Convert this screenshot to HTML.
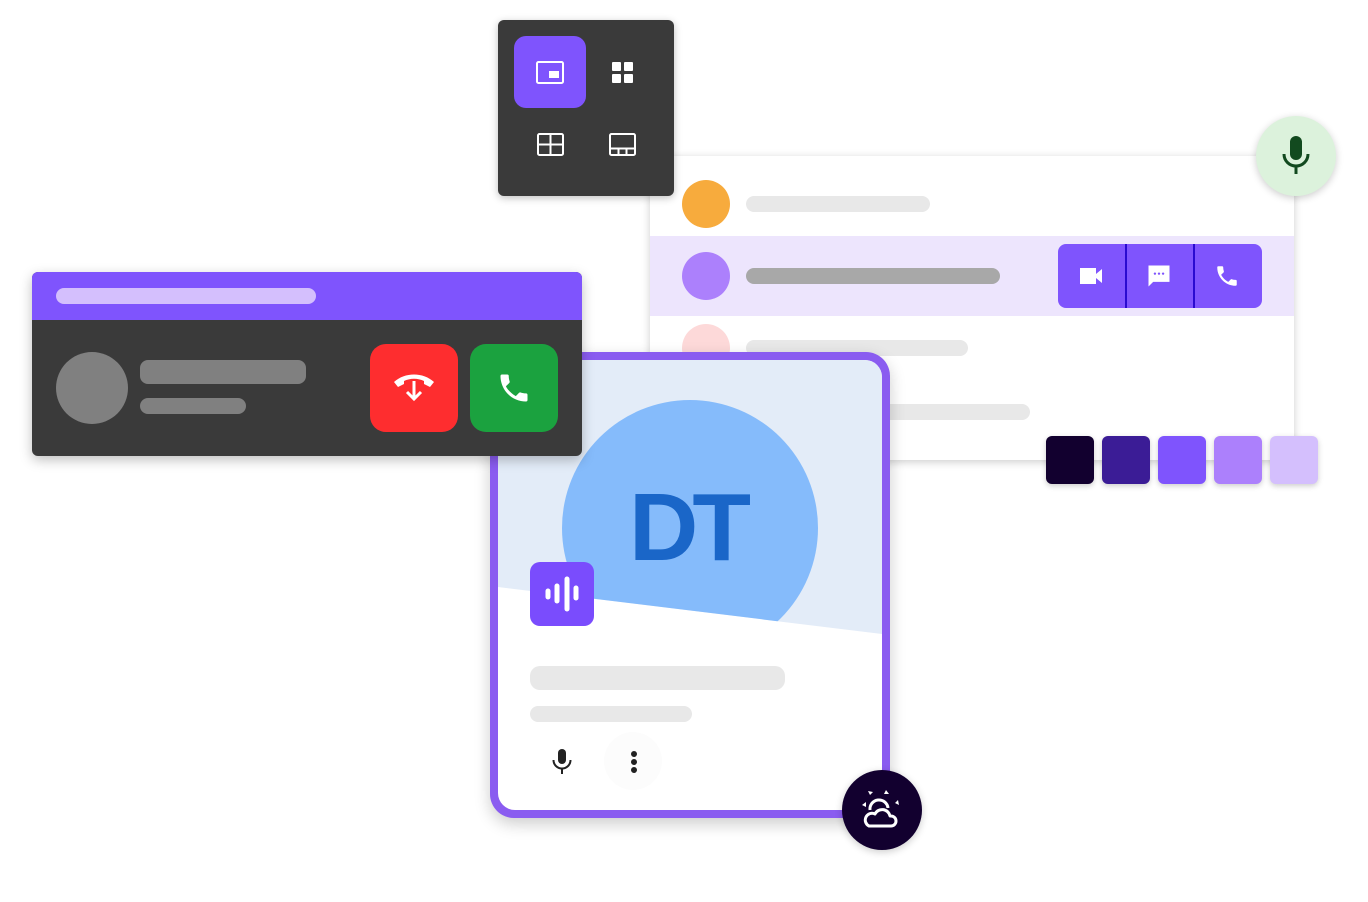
<!DOCTYPE html>
<html><head><meta charset="utf-8"><style>
*{margin:0;padding:0;box-sizing:border-box}
body{width:1368px;height:902px;background:#fff;position:relative;overflow:hidden;font-family:"Liberation Sans",sans-serif}
.a{position:absolute}
.bar{position:absolute;border-radius:8px}
</style></head><body>

<div class="a" style="left:650px;top:156px;width:644px;height:304px;background:#fff;box-shadow:0 2px 8px rgba(0,0,0,.2)">
  <div class="a" style="left:32px;top:24px;width:48px;height:48px;border-radius:50%;background:#f7ab3d"></div>
  <div class="bar" style="left:96px;top:40px;width:184px;height:16px;background:#e8e8e8"></div>
  <div class="a" style="left:0;top:80px;width:644px;height:80px;background:#ede5fd"></div>
  <div class="a" style="left:32px;top:96px;width:48px;height:48px;border-radius:50%;background:#ac80fc"></div>
  <div class="bar" style="left:96px;top:112px;width:254px;height:16px;background:#a8a8a8"></div>
  <div class="a" style="left:408px;top:88px;width:204px;height:64px;border-radius:8px;background:#7f54fd;overflow:hidden">
    <div class="a" style="left:67px;top:0;width:2px;height:64px;background:#2a0bd0"></div>
    <div class="a" style="left:135px;top:0;width:2px;height:64px;background:#2a0bd0"></div>
    <svg class="a" style="left:20px;top:19px" width="28" height="26" viewBox="0 0 28 26"><path fill="#fff" d="M2 5h16v16H2zM18 11l6-5v14l-6-5z"/></svg>
    <svg class="a" style="left:87px;top:18px" width="28" height="28" viewBox="0 0 24 24"><path fill="#fff" d="M3 3h18v14H7l-4 4z"/><circle cx="8.5" cy="10" r="1" fill="#7f54fd"/><circle cx="12" cy="10" r="1" fill="#7f54fd"/><circle cx="15.5" cy="10" r="1" fill="#7f54fd"/></svg>
    <svg class="a" style="left:156px;top:19px" width="26" height="26" viewBox="0 0 24 24"><path fill="#fff" d="M6.6 10.8c1.4 2.8 3.8 5.1 6.6 6.6l2.2-2.2c.3-.3.7-.4 1-.2 1.1.4 2.3.6 3.6.6.6 0 1 .4 1 1V20c0 .6-.4 1-1 1C10.6 21 3 13.4 3 4c0-.6.4-1 1-1h3.5c.6 0 1 .4 1 1 0 1.3.2 2.5.6 3.6.1.3 0 .7-.2 1z"/></svg>
  </div>
  <div class="a" style="left:32px;top:168px;width:48px;height:48px;border-radius:50%;background:#fdd9d9"></div>
  <div class="bar" style="left:96px;top:184px;width:222px;height:16px;background:#e8e8e8"></div>
  <div class="bar" style="left:96px;top:248px;width:284px;height:16px;background:#e8e8e8"></div>
</div>

<div class="a" style="left:1046px;top:436px;width:48px;height:48px;border-radius:6px;background:#12002f;box-shadow:0 2px 6px rgba(0,0,0,.2)"></div>
<div class="a" style="left:1102px;top:436px;width:48px;height:48px;border-radius:6px;background:#3b1c96;box-shadow:0 2px 6px rgba(0,0,0,.2)"></div>
<div class="a" style="left:1158px;top:436px;width:48px;height:48px;border-radius:6px;background:#7f54fd;box-shadow:0 2px 6px rgba(0,0,0,.2)"></div>
<div class="a" style="left:1214px;top:436px;width:48px;height:48px;border-radius:6px;background:#ac80fc;box-shadow:0 2px 6px rgba(0,0,0,.2)"></div>
<div class="a" style="left:1270px;top:436px;width:48px;height:48px;border-radius:6px;background:#d4bffd;box-shadow:0 2px 6px rgba(0,0,0,.2)"></div>

<div class="a" style="left:1256px;top:116px;width:80px;height:80px;border-radius:50%;background:#dcf2dc;box-shadow:0 2px 8px rgba(0,0,0,.2)">
  <svg class="a" style="left:22px;top:18px" width="36" height="42" viewBox="0 0 36 42"><rect x="12" y="2" width="12" height="24" rx="6" fill="#124a1f"/><path d="M6 20c0 7 5.5 12 12 12s12-5 12-12" fill="none" stroke="#124a1f" stroke-width="3"/><rect x="16.5" y="31" width="3" height="9" fill="#124a1f"/></svg>
</div>

<div class="a" style="left:498px;top:20px;width:176px;height:176px;border-radius:6px;background:#3a3a3a;box-shadow:0 2px 8px rgba(0,0,0,.25)">
  <div class="a" style="left:16px;top:16px;width:72px;height:72px;border-radius:12px;background:#7f54fd"></div>
  <svg class="a" style="left:38px;top:41px" width="28" height="24" viewBox="0 0 28 24"><rect x="1" y="1" width="26" height="21" rx="1.5" fill="none" stroke="#fff" stroke-width="2"/><rect x="13" y="10" width="10" height="7" fill="#fff"/></svg>
  <svg class="a" style="left:113px;top:41px" width="24" height="24" viewBox="0 0 24 24"><rect x="1" y="1" width="9" height="9" rx="1" fill="#fff"/><rect x="13" y="1" width="9" height="9" rx="1" fill="#fff"/><rect x="1" y="13" width="9" height="9" rx="1" fill="#fff"/><rect x="13" y="13" width="9" height="9" rx="1" fill="#fff"/></svg>
  <svg class="a" style="left:39px;top:113px" width="28" height="24" viewBox="0 0 28 24"><rect x="1" y="1" width="25" height="21" rx="1.5" fill="none" stroke="#fff" stroke-width="2"/><path d="M13.5 1v21M1 11.5h25" stroke="#fff" stroke-width="2"/></svg>
  <svg class="a" style="left:111px;top:113px" width="28" height="24" viewBox="0 0 28 24"><rect x="1" y="1" width="25" height="21" rx="1.5" fill="none" stroke="#fff" stroke-width="2"/><path d="M1 15.5h25M9.5 15.5v6.5M17.5 15.5v6.5" stroke="#fff" stroke-width="2"/></svg>
</div>

<div class="a" style="left:490px;top:352px;width:400px;height:466px;border-radius:24px;background:#8a5cf0;box-shadow:0 6px 16px rgba(0,0,0,.2)">
  <div class="a" style="left:8px;top:8px;width:384px;height:450px;border-radius:17px;background:#fff;overflow:hidden">
    <div class="a" style="left:0;top:0;width:384px;height:290px;background:#e3ecf8;clip-path:polygon(0 0,100% 0,100% 274px,0 227px)">
      <div class="a" style="left:64px;top:40px;width:256px;height:256px;border-radius:50%;background:#85bbfb"></div>
      <div class="a" style="left:64px;top:118px;width:256px;text-align:center;font-weight:bold;font-size:96px;line-height:100px;color:#1a66c8;letter-spacing:-6px;text-indent:-6px">DT</div>
    </div>
    <div class="a" style="left:32px;top:202px;width:64px;height:64px;border-radius:10px;background:#7a4cfd">
      <svg class="a" style="left:14px;top:14px" width="36" height="36" viewBox="0 0 36 36"><g stroke="#fff" stroke-linecap="round"><path d="M4 15v6" stroke-width="5"/><path d="M13 10v15" stroke-width="5"/><path d="M23 3v30" stroke-width="5"/><path d="M32 12v10" stroke-width="5"/></g></svg>
    </div>
    <div class="bar" style="left:32px;top:306px;width:255px;height:24px;border-radius:10px;background:#e8e8e8"></div>
    <div class="bar" style="left:32px;top:346px;width:162px;height:16px;background:#e8e8e8"></div>
    <svg class="a" style="left:52px;top:388px" width="24" height="28" viewBox="0 0 24 28"><rect x="8" y="1" width="8" height="15" rx="4" fill="#222"/><path d="M3.5 12c0 5 4 8.5 8.5 8.5s8.5-3.5 8.5-8.5" fill="none" stroke="#222" stroke-width="2"/><rect x="11" y="20" width="2" height="6" fill="#222"/></svg>
    <div class="a" style="left:106px;top:372px;width:58px;height:58px;border-radius:50%;background:#fcfcfc"></div>
    <svg class="a" style="left:132px;top:390px" width="8" height="26" viewBox="0 0 8 26"><circle cx="4" cy="4" r="3" fill="#222"/><circle cx="4" cy="12" r="3" fill="#222"/><circle cx="4" cy="20" r="3" fill="#222"/></svg>
  </div>
</div>

<div class="a" style="left:842px;top:770px;width:80px;height:80px;border-radius:50%;background:#12002f;box-shadow:0 2px 8px rgba(0,0,0,.2)">
  <svg class="a" style="left:18px;top:18px" width="44" height="44" viewBox="0 0 44 44"><g fill="#fff"><path d="M8 3l5 1-3 3zM26 2l3 4-5 0zM38 12l1 5-4-2zM2 17l4-3 0 5z"/></g><path d="M10 22a9 9 0 0 1 18-2" fill="none" stroke="#fff" stroke-width="3"/><path d="M9 38h22a5 5 0 0 0 0-10h-1a8 8 0 0 0-15-2 6 6 0 0 0-6 12z" fill="none" stroke="#fff" stroke-width="3" stroke-linejoin="round"/></svg>
</div>

<div class="a" style="left:32px;top:272px;width:550px;height:184px;border-radius:6px;background:#3a3a3a;overflow:hidden;box-shadow:0 4px 12px rgba(0,0,0,.25)">
  <div class="a" style="left:0;top:0;width:550px;height:48px;background:#7f54fd"></div>
  <div class="bar" style="left:24px;top:16px;width:260px;height:16px;background:#d4bffd"></div>
  <div class="a" style="left:24px;top:80px;width:72px;height:72px;border-radius:50%;background:#808080"></div>
  <div class="bar" style="left:108px;top:88px;width:166px;height:24px;background:#808080"></div>
  <div class="bar" style="left:108px;top:126px;width:106px;height:16px;background:#808080"></div>
  <div class="a" style="left:338px;top:72px;width:88px;height:88px;border-radius:16px;background:#fe2d2f">
    <svg class="a" style="left:22px;top:26px" width="44" height="40" viewBox="0 0 44 40"><path fill="#fff" d="M2 12c11-10 29-10 40 0l-4 5-6-3v-3c-6-3-14-3-20 0v3l-6 3z"/><path d="M22 11v18M15 22l7 7 7-7" fill="none" stroke="#fff" stroke-width="3"/></svg>
  </div>
  <div class="a" style="left:438px;top:72px;width:88px;height:88px;border-radius:16px;background:#1ba23f">
    <svg class="a" style="left:26px;top:26px" width="36" height="36" viewBox="0 0 24 24"><path fill="#fff" d="M6.6 10.8c1.4 2.8 3.8 5.1 6.6 6.6l2.2-2.2c.3-.3.7-.4 1-.2 1.1.4 2.3.6 3.6.6.6 0 1 .4 1 1V20c0 .6-.4 1-1 1C10.6 21 3 13.4 3 4c0-.6.4-1 1-1h3.5c.6 0 1 .4 1 1 0 1.3.2 2.5.6 3.6.1.3 0 .7-.2 1z"/></svg>
  </div>
</div>

</body></html>
